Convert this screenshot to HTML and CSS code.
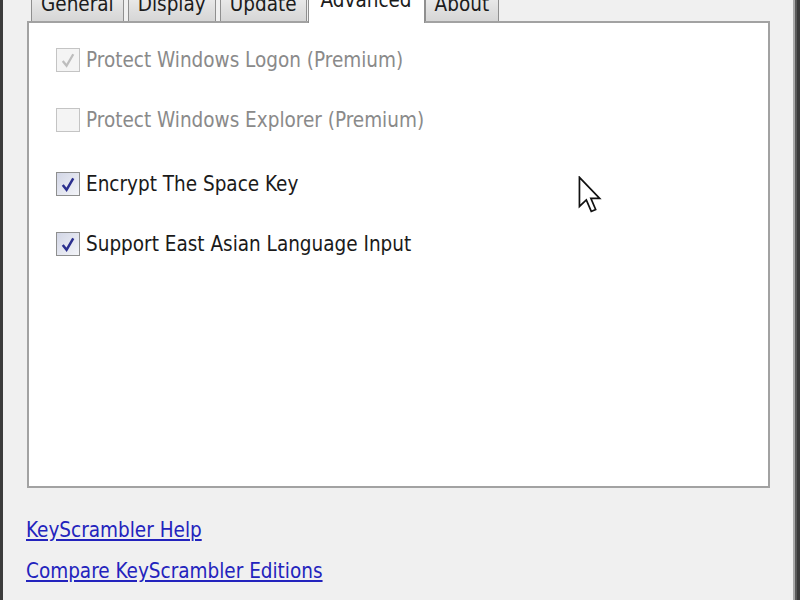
FILE: index.html
```html
<!DOCTYPE html>
<html>
<head>
<meta charset="utf-8">
<link rel="stylesheet" href="styles.css">
</head>
<body>
<div class="window">
  <div class="tabs">
    <div class="tab">General</div>
    <div class="tab">Display</div>
    <div class="tab">Update</div>
    <div class="tab selected">Advanced</div>
    <div class="tab">About</div>
  </div>
  <div class="panel">
    <div class="option disabled">
      <span class="box checked"><svg viewBox="0 0 23 23" width="23" height="23"><path d="M6 12 L10 17 L17 5" fill="none" stroke="#bdbdbd" stroke-width="2.4"/></svg></span>
      <span class="label">Protect Windows Logon (Premium)</span>
    </div>
    <div class="option disabled gap-after">
      <span class="box"></span>
      <span class="label">Protect Windows Explorer (Premium)</span>
    </div>
    <div class="option">
      <span class="box checked"><svg viewBox="0 0 23 23" width="23" height="23"><path d="M6 12 L10 17 L17 5" fill="none" stroke="#2b2f8f" stroke-width="2.6"/></svg></span>
      <span class="label">Encrypt The Space Key</span>
    </div>
    <div class="option">
      <span class="box checked"><svg viewBox="0 0 23 23" width="23" height="23"><path d="M6 12 L10 17 L17 5" fill="none" stroke="#2b2f8f" stroke-width="2.6"/></svg></span>
      <span class="label">Support East Asian Language Input</span>
    </div>
    <svg class="cursor" viewBox="0 0 13 21" width="25" height="40"><path d="M0.7 0.7 L0.7 16 L4.3 12.6 L6.9 18.6 L9.2 17.6 L6.7 11.7 L11.3 11.7 Z" fill="#fff" stroke="#111" stroke-width="0.9" stroke-linejoin="miter"/></svg>
  </div>
  <div class="links">
    <a class="link" href="#">KeyScrambler Help</a>
    <a class="link" href="#">Compare KeyScrambler Editions</a>
  </div>
</div>
</body>
</html>
```

FILE: styles.css
```css
html, body {
  margin: 0;
  padding: 0;
  width: 800px;
  height: 600px;
  overflow: hidden;
  background: #3a3a3a;
}

.window {
  box-sizing: border-box;
  width: 793px;
  height: 600px;
  border-left: 3px solid #3c3c3c;
  background: #f0f0f0;
  box-shadow: 2px 0 0 #a9a9a9, 4px 0 0 #5a5a5a;
  font-family: "DejaVu Sans Condensed", "DejaVu Sans", sans-serif;
  font-size: 20.5px;
  color: #1a1a1a;
  overflow: hidden;
}

.tabs {
  display: flex;
  align-items: flex-end;
  margin-left: 28px;
  margin-top: -12px;
  height: 33px;
}

.tab {
  box-sizing: border-box;
  height: 32px;
  padding: 0 9px;
  margin-right: 4px;
  border: 1px solid #8f8f8f;
  border-bottom: none;
  background: linear-gradient(#f2f2f2, #e0e0e0 60%, #d6d6d6);
  line-height: 29px;
  color: #1c1c1c;
}

.tab.selected {
  height: 37px;
  margin-left: -3px;
  margin-right: 0;
  margin-bottom: -2px;
  padding: 0 12px;
  background: #ffffff;
  line-height: 26px;
  position: relative;
  z-index: 1;
}

.panel {
  box-sizing: border-box;
  position: relative;
  width: 743px;
  height: 467px;
  margin-left: 24px;
  border: 2px solid #a2a2a2;
  background: #ffffff;
  padding: 25px 0 0 27px;
}

.option {
  display: flex;
  align-items: center;
  height: 24px;
  margin-bottom: 36px;
}

.option.gap-after {
  margin-bottom: 40px;
}

.box {
  box-sizing: border-box;
  width: 24px;
  height: 24px;
  border: 1px solid #8e8f8f;
  background: linear-gradient(135deg, #dcdcdc, #f7f7f7);
  display: flex;
  margin-right: 6px;
}

.box svg {
  display: block;
}

.disabled .box {
  border-color: #c4c4c4;
  background: #f4f4f4;
}

.option:not(.disabled) .box {
  background: linear-gradient(135deg, #d2d6e6, #f3f4f8);
}

.label {
  line-height: 24px;
}

.disabled .label {
  color: #8a8a8a;
}

.cursor {
  position: absolute;
  left: 549px;
  top: 153px;
}

.links {
  display: flex;
  flex-direction: column;
  align-items: flex-start;
  padding-left: 23px;
  padding-top: 30px;
  gap: 16px;
}

.link {
  color: #2323bd;
  text-decoration: underline;
  line-height: 25px;
}
```
